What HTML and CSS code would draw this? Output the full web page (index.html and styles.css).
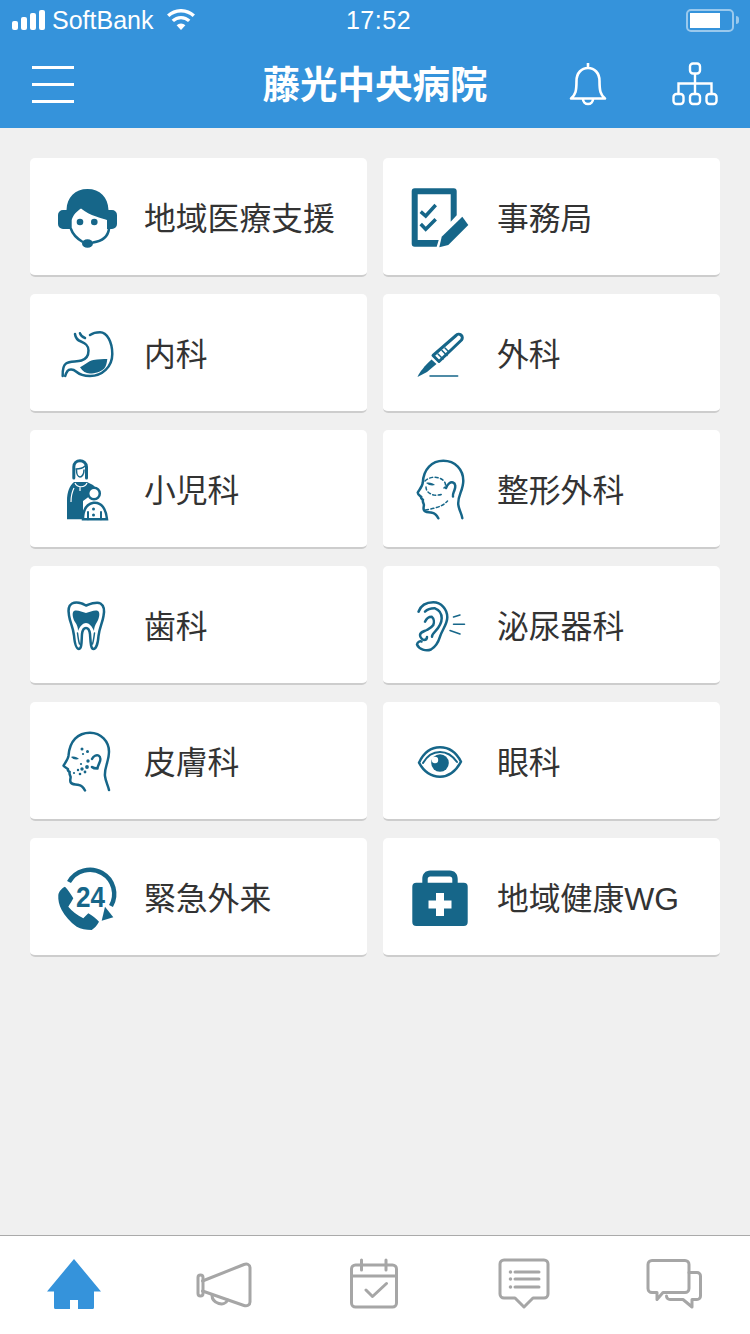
FILE: index.html
```html
<!DOCTYPE html>
<html lang="ja">
<head>
    <meta charset="UTF-8">
    <meta name="viewport" content="width=device-width, initial-scale=1.0">
    <title>藤光中央病院</title>
    <link rel="stylesheet" href="styles.css">
</head>
<body>
    <div class="top">
        <div class="status">
            <div class="status-left">
                <div class="signal"><i class="b1"></i><i class="b2"></i><i class="b3"></i><i class="b4"></i></div>
                <span class="carrier">SoftBank</span>
                <svg class="wifi" width="30" height="22" viewBox="0 0 30 22"><path d="M15 21 10.6 16.2a6.4 6.4 0 0 1 8.8 0Z" fill="#fff"/><path d="M6.8 11.9a11.8 11.8 0 0 1 16.4 0M2.2 6.8a18.6 18.6 0 0 1 25.6 0" fill="none" stroke="#fff" stroke-width="3.4"/></svg>
            </div>
            <span class="time">17:52</span>
            <div class="status-right">
                <div class="battery"><div class="battery-fill"></div></div>
                <div class="battery-tip"></div>
            </div>
        </div>
        <header class="header">
            <div class="header-left">
                <div class="burger"><i></i><i></i><i></i></div>
            </div>
            <h1 class="title">藤光中央病院</h1>
            <div class="header-right">
                <svg class="bell" width="38" height="44" viewBox="0 0 38 44" fill="none" stroke="#fff" stroke-width="2.6"><path d="M19 1v5M2 36.500C6.500 33 7.500 29 7.500 19 7.500 11 12.500 6 19 6s11.500 5 11.500 13c0 10 1 14 5.500 17.500Z" stroke-linejoin="round"/><path d="M14 37a5 5 0 0 0 10 0"/></svg>
                <svg class="org" width="46" height="44" viewBox="0 0 46 44" fill="none" stroke="#fff" stroke-width="2.4"><rect x="18" y="1.500" width="10" height="10" rx="3"/><rect x="1.500" y="32" width="10" height="10" rx="3"/><rect x="18" y="32" width="10" height="10" rx="3"/><rect x="34.500" y="32" width="10" height="10" rx="3"/><path d="M23 11.500V32M6.500 32V21.500h33V32"/></svg>
            </div>
        </header>
    </div>

    <main class="grid">
        <a class="card">
            <svg class="icon" viewBox="0 0 70 70"><path class="f" d="M11 28h3.500C15 15 23 7 35.500 7S56 15 56.500 28H60a5 5 0 0 1 5 5v9a5 5 0 0 1-5 5h-5V38C50 36 38 34 29 26.500 25 29 21 33 19.700 38V47H11a5 5 0 0 1-5-5v-9a5 5 0 0 1 5-5Z"/><path class="s w25" d="M19 47C21 53 26 57 30 59.500M57 47C56 54 51 59 41 60.500"/><circle class="f" cx="28" cy="40" r="3.300"/><circle class="f" cx="42.300" cy="40" r="3.300"/><ellipse class="f" cx="35.500" cy="61.500" rx="5.500" ry="4.300"/></svg>
            <span class="label">地域医療支援</span>
        </a>
        <a class="card">
            <svg class="icon" viewBox="0 0 70 70"><path class="f" d="M9.700 6.300h39a3 3 0 0 1 3 3v24L45.700 39.700V12.300h-33V58h21l-2 6.700h-22a3 3 0 0 1-3-3V9.300a3 3 0 0 1 3-3Z"/><path class="s w35" d="M15.700 29.700l5 4.300 10-11M15.700 42l5 5.300 10-10"/><path class="f" d="M57.300 34.700 63.300 43 43.300 63l-9 2.300 2.400-10.600Z"/></svg>
            <span class="label">事務局</span>
        </a>
        <a class="card">
            <svg class="icon" viewBox="0 0 70 70"><path class="s w25" d="M23 16c.5 4 2 6 6 7.500 5 2 7.500 4 7.500 9 0 5-2 8.500-7 10-5 1.500-12 .5-15.500 3C11 47.500 10.500 52 10.700 58"/><path class="s w25" d="M28 15.300c1 3 3 4 5 4.700M38 17c3-2 6-2.700 10-2.700C55 14.300 60.300 24 60.300 36 60.300 49 50 58 38 58c-6 0-10-1-14-4.500-3-2.500-7-2.500-8.500-.5-1 1.500-2 3-2.300 5"/><path class="f" d="M28 49.300C33 47 36 43 41.300 42c5-1 10-1 14-1-.5 4-1 7-3 9.500-3 3-9 5-14.500 5-4 0-7-2-9.800-6.200Z"/></svg>
            <span class="label">内科</span>
        </a>
        <a class="card">
            <svg class="icon" viewBox="0 0 70 70"><path class="s w3" d="M28 37.500 51 17.500a3.500 3.500 0 0 1 5.500 4.500L34 43.500Z"/><path class="s w15" d="M33 36l5 5M37 32.500l5 5M40 30l4 4"/><path class="f" d="M26.500 41.500 31.500 46 22 54l-9.500 5c2-5 7.500-11.500 14-17.500Z"/><path class="s w15" d="M25 58h27.700"/></svg>
            <span class="label">外科</span>
        </a>
        <a class="card">
            <svg class="icon" viewBox="0 0 70 70"><path class="s w3" d="M21.800 24V13c0-4 3-6.300 6.200-6.300S34.500 9 34.500 13v11"/><path class="s w15" d="M24 15c4 0 7-1 9-3M24.500 16c0 4 1.500 7 3.500 7s4-3 4-7"/><path class="f" d="M15 65.300V47c0-9 2.500-15.500 7-19h13l6 3 5 5-15 11v18.300Z"/><path class="white" d="M23 29c2 5 10 5 12 0M28 33v4M19 48c0-6 1-10 3-14"/><circle class="halo" cx="42" cy="39.500" r="5.800"/><path class="halo" d="M31 65.300c0-9 3-15 10.500-16.500 8-1 12.500 6 13.500 16.500Z"/><path class="s w2" d="M36 65.300V58M49 65.300V58"/><circle class="f" cx="41.500" cy="55" r="1.500"/><circle class="f" cx="41.500" cy="61" r="1.500"/></svg>
            <span class="label">小児科</span>
        </a>
        <a class="card">
            <svg class="icon" viewBox="0 0 70 70"><path class="s w25" d="M33.300 64.300c-1.500-3-3-5-6-5.500-4-1-7.500 0-8.500-3-.8-2.500.5-4 0-5.500-.5-1.500-1.500-3-.8-4.500-1-1-2.500-1-1.700-2.800-1-1-4-3-3.500-4.500 1-2 4.500-6 5-10C18.500 15 27 6.700 38.300 6.700c12 0 20 9 20 20 0 10-6 15-5 24 .5 5 3.500 9 4 13.500"/><path class="s w25" d="M41 34c1.500-4 4.500-6.500 7-5.500 3 1 2.500 5 1.500 7.500-1 3-2 4-1.500 6.500"/><path class="s w15 d" d="M20 27c5-5 14-5 19 0 2 3 2 5 0 7M21 33c0 4 3 7 8 8 3 .5 7 0 8-1M20.500 56c5-1 11-2 15-4 3-1 5-3 7-5"/><path class="f" d="M21 29c3-1 7 0 9 2-3 1-6 .5-9-2Z"/></svg>
            <span class="label">整形外科</span>
        </a>
        <a class="card">
            <svg class="icon" viewBox="0 0 70 70"><path class="s w25" d="M34 15.500C30 13 24 11.500 20 13.500c-4 2.500-4 7-3 12 1 7 4 11 5 20 .5 6 2 13.500 5 13.500 3 0 2.500-9 3-15 .5-4 2-6 4-6s3.500 2 4 6c.5 6 .5 15 3.500 15 2.500 0 4.500-6 5-13 1-9 4-13 5-20 1-5 1-10-3-12.500-4-2-9 0-14.500 2Z"/><path class="f" d="M22 21c3-1.500 8 1 12 2 4-1 9-3.500 12-2 2.500 1.500 1 8-1 11-2 3-3 6-3 9-2-5-5-8-8-8s-6 3-8 8c0-4-1-6-3-9-2-3-3.500-9.500-1-11Z"/><path class="s w15" d="M25.500 43c.5 4 1 8 2 11M42.500 43c-.5 4-1 8-2 11"/></svg>
            <span class="label">歯科</span>
        </a>
        <a class="card">
            <svg class="icon" viewBox="0 0 70 70"><path class="s w25" d="M13.500 21.700C16 15 22 12.300 28.300 12.300c8 0 14 7 14 15 0 7-5 12-7.300 19.400-1.500 5-4 10-9 12.800-5 2-12 0-14-5 .5-2.500 3-4 4.500-3"/><path class="s w25" d="M20 21.700c2.500-2.500 6-3.500 10-3.400 4 1.500 6.700 5 6.700 10 0 5-3 9.500-6.700 13.400-2 2-3 3-3 5M20 31.700c1.500-3.500 4.500-5 6.700-5 2.500 2 2.500 6 1.600 8.300-2 3-5 4-6.600 5-3 1.500-6.700 2-6.700 5 0 3 3 5 4 5 2 0 3-1.500 3-3"/><path class="s w15" d="M48.500 27l6.500-2M48.500 34.300h11M45 40.500l10 3.500"/></svg>
            <span class="label">泌尿器科</span>
        </a>
        <a class="card">
            <svg class="icon" viewBox="0 0 70 70"><path class="s w25" d="M33 64.500c-1.500-3-3-5-6-5.500-4-1-7.500 0-8.500-3-.8-2.500.5-4 0-5.500-.5-1.500-1.500-3-.8-4.500-1-1-2.500-1-1.700-2.800-1-1-4-2.500-4.500-3.500 1-2 4.500-6 5-10C17.500 15 26 6.700 38 6.700c11 0 19 9 19 19 0 10-5 16-4 24.500.5 5 3 9 4 13.800"/><path class="s w25" d="M40 33c1.500-3 4.500-4.500 6.500-3.500 2.500 1.500 2 5 1 7-1 3-2 4-2 6-3 0-4.500-.5-5.500-1.500"/><path class="f" d="M19 31c3-1 6 0 8 2-3 1-6 .5-8-2Z"/><g class="f"><circle cx="30" cy="23" r="1.500"/><circle cx="35.500" cy="25.500" r="1.500"/><circle cx="31" cy="28" r="1.100"/><circle cx="36" cy="35" r="1.700"/><circle cx="35" cy="41" r="1.900"/><circle cx="30" cy="43" r="1.700"/><circle cx="26" cy="44" r="1.200"/><circle cx="28" cy="48" r="1.300"/><circle cx="33" cy="46" r="1.400"/><circle cx="29" cy="38" r="1.100"/><circle cx="22" cy="47" r="1.100"/></g></svg>
            <span class="label">皮膚科</span>
        </a>
        <a class="card">
            <svg class="icon" viewBox="0 0 70 70"><path class="s w25" d="M14 36.700C19 26 27 21.300 35 21.300S51 26 56 35.700C51 45 44 50.700 35 50.700S19 46 14 36.700Z"/><path class="s w2" d="M18 37c4-7 10-11 17-11 6.500 0 12.500 3.500 17 10"/><circle class="f" cx="35" cy="37" r="8.800"/><circle cx="30" cy="34" r="3.200" fill="#fff"/></svg>
            <span class="label">眼科</span>
        </a>
        <a class="card">
            <svg class="icon" viewBox="0 0 70 70"><path class="s w5" d="M17 20A23.500 23.500 0 1 1 59 44"/><path class="f" d="M49.700 58.700 61.300 55.300 53 44.700Z"/><path class="f" d="M6.300 33C7 29 10 26 13 24.700 16 28 19 32 21.300 36.300 20 39 18 42 16.300 44.700 20 49 25 53 31.300 56.300L36.300 51.300C40 53.500 44 56.500 47 59.700 45 63 43 66 39.700 68 34 68 29 67 24.700 64.700 18 60 13 54 9.700 48 7 43 6 38 6.300 33Z"/><text class="num" x="38.500" y="45" text-anchor="middle" textLength="29" lengthAdjust="spacingAndGlyphs">24</text></svg>
            <span class="label">緊急外来</span>
        </a>
        <a class="card">
            <svg class="icon" viewBox="0 0 70 70"><path class="f" fill-rule="evenodd" d="M17.300 20.700V17c0-5 3-8.500 8-8.500h19.400c5 0 8 3.500 8 8.500v3.700h6a4 4 0 0 1 4 4V60a4 4 0 0 1-4 4H11.300a4 4 0 0 1-4-4V24.700a4 4 0 0 1 4-4ZM22.700 20.700h24.600V17c0-1.500-1-2.500-2.500-2.500H25.200c-1.500 0-2.500 1-2.500 2.500ZM31 31v7.500h-7.500v8H31V54h8v-7.500h7.500v-8H39V31Z"/></svg>
            <span class="label">地域健康WG</span>
        </a>
    </main>

    <nav class="tabs">
        <div class="tab"><svg width="60" height="60" viewBox="45 1255 60 60"><path fill="#3593db" d="M74 1259 101 1291.500H94V1307.500a1.500 1.500 0 0 1-1.500 1.500H78V1300H70V1309H55.500a1.500 1.500 0 0 1-1.500-1.500V1291.500H47Z"/></svg></div>
        <div class="tab"><svg class="t" width="60" height="60" viewBox="195 1255 60 60"><path d="M202.500 1281 244 1264.500c3-1 6 0 6 3V1302c0 3-3 4.500-6 3.500L202.500 1291"/><rect x="198" y="1275" width="5" height="21" rx="2.500"/><path d="M212 1295c0 9 13 12 15.500 5"/></svg></div>
        <div class="tab"><svg class="t" width="60" height="60" viewBox="345 1255 60 60"><rect x="351.500" y="1265" width="45" height="42" rx="4"/><path d="M351.500 1276h45M361.500 1260v10M386 1260v10M366 1290l6.500 6.500 14-13"/></svg></div>
        <div class="tab"><svg class="t" width="60" height="60" viewBox="495 1255 60 60"><path d="M504 1260h40a4 4 0 0 1 4 4v30a4 4 0 0 1-4 4h-11l-9 9-9-9h-11a4 4 0 0 1-4-4v-30a4 4 0 0 1 4-4Z"/><path d="M515 1272h24M515 1279h24M515 1287h24"/><path class="dots" d="M510.500 1272v.1M510.500 1279v.1M510.500 1287v.1"/></svg></div>
        <div class="tab"><svg class="t" width="60" height="60" viewBox="645 1255 60 60"><path d="M652 1260.500h33a4 4 0 0 1 4 4v24a4 4 0 0 1-4 4h-22l-6 7v-7h-5a4 4 0 0 1-4-4v-24a4 4 0 0 1 4-4Z"/><path d="M689 1272.500h8a3.500 3.500 0 0 1 3.500 3.500v20a3.500 3.500 0 0 1-3.500 3.500h-5v7.500l-9-7.500h-13a3.500 3.500 0 0 1-3.500-3.500"/></svg></div>
    </nav>
</body>
</html>
```

FILE: styles.css
```css
body, html {
    margin: 0;
    padding: 0;
    height: 100%;
}
body {
    display: flex;
    flex-direction: column;
    background: #f0f0f0;
    color: #333;
    font-family: "Liberation Sans", "Noto Sans CJK JP", sans-serif;
}
.top {
    background: #3593db;
    color: #fff;
}
.status {
    height: 40px;
    display: grid;
    grid-template-columns: 1fr auto 1fr;
    align-items: center;
    padding: 0 11px 0 12px;
}
.status-left {
    display: flex;
    align-items: center;
}
.signal {
    display: flex;
    align-items: flex-end;
    gap: 3px;
    height: 20px;
}
.signal i {
    width: 6px;
    background: #fff;
    border-radius: 2px;
}
.signal .b1 { height: 9px; }
.signal .b2 { height: 13px; }
.signal .b3 { height: 17px; }
.signal .b4 { height: 20px; }
.carrier {
    margin-left: 7px;
    font-size: 25px;
}
.wifi {
    margin-left: 13px;
}
.time {
    margin-left: 6px;
    font-size: 25px;
    letter-spacing: 0.5px;
}
.status-right {
    display: flex;
    justify-content: flex-end;
    align-items: center;
}
.battery {
    width: 40px;
    height: 15px;
    padding: 2px;
    border: 2px solid rgba(255, 255, 255, 0.5);
    border-radius: 5px;
}
.battery-fill {
    width: 30px;
    height: 15px;
    background: #fff;
}
.battery-tip {
    width: 3px;
    height: 8px;
    margin-left: 2px;
    background: rgba(255, 255, 255, 0.5);
    border-radius: 0 3px 3px 0;
}
.header {
    height: 88px;
    display: flex;
    align-items: center;
}
.header-left {
    flex: 1;
    padding-left: 32px;
}
.burger {
    width: 42px;
    display: flex;
    flex-direction: column;
    gap: 14px;
}
.burger i {
    height: 3px;
    background: #fff;
}
.title {
    margin: 0;
    padding-top: 4px;
    font-size: 37.5px;
    font-weight: 700;
    line-height: 1;
}
.header-right {
    flex: 1;
    display: flex;
    justify-content: flex-end;
    align-items: center;
    padding-right: 32px;
}
.bell {
    margin-right: 65px;
}
.grid {
    flex: 1;
    display: grid;
    grid-template-columns: 337px 337px;
    grid-auto-rows: 119px;
    align-content: start;
    column-gap: 16px;
    row-gap: 17px;
    padding: 30px 30px 0;
}
.card {
    display: flex;
    align-items: center;
    gap: 22px;
    padding-left: 22px;
    background: #fff;
    border-radius: 5px;
    border-bottom: 2px solid #cdcdcd;
    box-sizing: border-box;
}
.icon {
    width: 70px;
    height: 70px;
    flex: none;
    overflow: visible;
}
.f { fill: #166689; }
.s {
    fill: none;
    stroke: #166689;
    stroke-linecap: round;
    stroke-linejoin: round;
}
.white {
    fill: none;
    stroke: #fff;
    stroke-width: 1.2;
}
.halo {
    fill: #fff;
    stroke: #166689;
    stroke-width: 2.5;
}
.w15 { stroke-width: 1.5; }
.w2 { stroke-width: 2; }
.w25 { stroke-width: 2.5; }
.w3 { stroke-width: 3; }
.w35 { stroke-width: 3.5; stroke-linecap: butt; stroke-linejoin: miter; }
.w5 { stroke-width: 4.5; stroke-linecap: butt; }
.d { stroke-dasharray: 3 2.5; }
.num {
    font-size: 30px;
    font-weight: 700;
    fill: #166689;
}
.label {
    padding-top: 6px;
    font-size: 31.8px;
    line-height: 1;
    color: #333;
}
.tabs {
    height: 98px;
    display: flex;
    background: #fff;
    border-top: 1px solid #aaa;
    flex: none;
}
.tab {
    flex: 1;
    display: flex;
    justify-content: center;
    align-items: center;
}
.t {
    fill: none;
    stroke: #a6a6a6;
    stroke-width: 3;
    stroke-linejoin: round;
    stroke-linecap: round;
}
.t .dots { stroke-width: 3.5; }
```
